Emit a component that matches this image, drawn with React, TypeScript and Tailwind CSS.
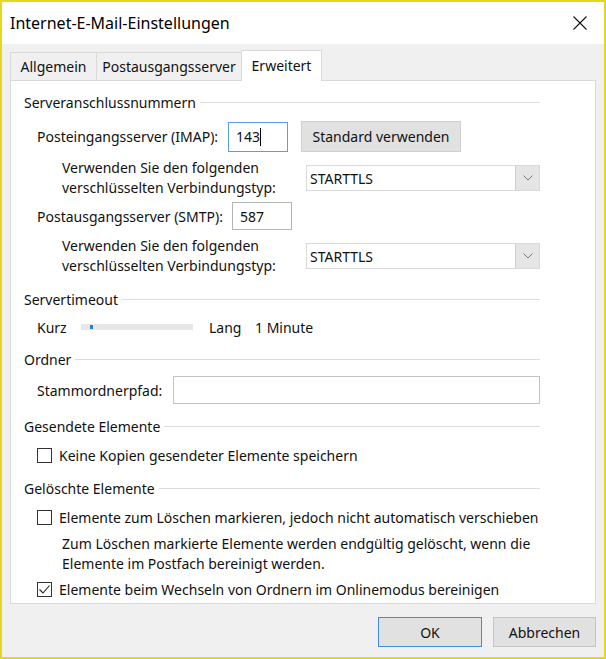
import React from 'react';

const font = { fontFamily: '"Noto Sans", "Open Sans", sans-serif' };

function GroupHeader({ title, className = '' }: { title: string; className?: string }) {
  return (
    <div className={`flex items-center h-[20px] ${className}`}>
      <span className="whitespace-nowrap">{title}</span>
      <div className="ml-[4px] flex-1 h-px bg-[#dcdcdc]" />
    </div>
  );
}

function Combo({ value }: { value: string }) {
  return (
    <div className="flex w-[234px] h-[26px] border border-[#d9d9d9] bg-white">
      <div className="flex-1 flex items-center pl-[3px]">{value}</div>
      <div className="w-[24px] h-full bg-[#e5e5e5] border-l border-[#cccccc] flex items-center justify-center">
        <svg width="10" height="6" viewBox="0 0 10 6">
          <path d="M0.5 0.5 L5 5 L9.5 0.5" fill="none" stroke="#7a7a7a" strokeWidth="1" />
        </svg>
      </div>
    </div>
  );
}

function Checkbox({ checked = false }: { checked?: boolean }) {
  return (
    <div className="w-[15px] h-[15px] border border-[#333333] bg-white flex items-center justify-center flex-none">
      {checked && (
        <svg width="13" height="13" viewBox="0 0 13 13">
          <path d="M1.5 6.5 L5 10 L11.5 2.5" fill="none" stroke="#222222" strokeWidth="1.1" />
        </svg>
      )}
    </div>
  );
}

function EncryptionRow({ className = '' }: { className?: string }) {
  return (
    <div className={`flex items-center h-[40px] ml-[38px] ${className}`}>
      <div className="w-[244px] leading-[20px] whitespace-nowrap">
        Verwenden Sie den folgenden
        <br />
        verschlüsselten Verbindungstyp:
      </div>
      <Combo value="STARTTLS" />
    </div>
  );
}

function Tab({ label, width, active = false }: { label: string; width: string; active?: boolean }) {
  if (active) {
    return (
      <div
        className={`${width} h-[31px] -mb-px relative z-10 bg-white border border-b-0 border-[#d9d9d9] flex items-center justify-center pb-[2px]`}
      >
        {label}
      </div>
    );
  }
  return (
    <div className={`${width} h-[28px] border border-b-0 border-r-0 border-[#d9d9d9] flex items-center justify-center`}>
      {label}
    </div>
  );
}

export default function App() {
  return (
    <div
      className="w-[606px] h-[659px] border-2 border-[#e8d520] bg-[#f0f0f0] flex flex-col text-[14px] text-[#111111]"
      style={font}
    >
      {/* title bar */}
      <div className="h-[42px] flex-none bg-white flex items-center justify-between pl-[8px] pr-[17px]">
        <span className="text-[16px] text-black">Internet-E-Mail-Einstellungen</span>
        <svg width="14" height="14" viewBox="0 0 14 14">
          <path d="M0.5 0.5 L13.5 13.5 M13.5 0.5 L0.5 13.5" stroke="#111111" strokeWidth="1.1" />
        </svg>
      </div>

      <div className="flex-1 flex flex-col px-[8px]">
        {/* tabs */}
        <div className="flex items-end pt-[6px]">
          <Tab label="Allgemein" width="w-[86px]" />
          <Tab label="Postausgangsserver" width="w-[145px]" />
          <Tab label="Erweitert" width="w-[81px]" active />
        </div>

        {/* panel */}
        <div className="h-[524px] flex-none bg-white border border-[#d9d9d9] pl-[13px] pt-[11px]">
          <div className="w-[516px] flex flex-col">
            <GroupHeader title="Serveranschlussnummern" />

            <div className="flex items-center h-[31px] mt-[9px] ml-[13px]">
              <span className="w-[191px] whitespace-nowrap">Posteingangsserver (IMAP):</span>
              <div className="w-[60px] h-[30px] border border-[#5a9ee6] flex items-center pl-[7px]">
                <span>143</span>
                <span className="w-px h-[18px] bg-black" />
              </div>
              <button className="ml-[13px] w-[160px] h-[31px] bg-[#e1e1e1] border border-[#cfcfcf]">
                Standard verwenden
              </button>
            </div>

            <EncryptionRow className="mt-[6px]" />

            <div className="flex items-center h-[28px] mt-[4px] ml-[13px]">
              <span className="w-[195px] whitespace-nowrap">Postausgangsserver (SMTP):</span>
              <div className="w-[60px] h-[28px] border border-[#b4b4b4] flex items-center pl-[7px]">587</div>
            </div>

            <EncryptionRow className="mt-[6px]" />

            <GroupHeader title="Servertimeout" className="mt-[13px]" />

            <div className="flex items-center h-[20px] mt-[8px] ml-[13px]">
              <span className="w-[44px]">Kurz</span>
              <div className="relative w-[112px] h-[6px] bg-[#e7e7e7]">
                <div className="absolute left-[9px] top-[1px] w-[3px] h-[4px] bg-[#2a7fd0]" />
              </div>
              <span className="ml-[16px] w-[46px]">Lang</span>
              <span>1 Minute</span>
            </div>

            <GroupHeader title="Ordner" className="mt-[12px]" />

            <div className="flex items-center h-[28px] mt-[7px] ml-[13px]">
              <span className="w-[136px] whitespace-nowrap">Stammordnerpfad:</span>
              <div className="w-[367px] h-[28px] border border-[#c3c3c3]" />
            </div>

            <GroupHeader title="Gesendete Elemente" className="mt-[12px]" />

            <div className="flex items-center h-[20px] mt-[9px] ml-[13px]">
              <Checkbox />
              <span className="ml-[7px] whitespace-nowrap">Keine Kopien gesendeter Elemente speichern</span>
            </div>

            <GroupHeader title="Gelöschte Elemente" className="mt-[13px]" />

            <div className="flex items-center h-[20px] mt-[9px] ml-[13px]">
              <Checkbox />
              <span className="ml-[7px] whitespace-nowrap">
                Elemente zum Löschen markieren, jedoch nicht automatisch verschieben
              </span>
            </div>

            <div className="h-[40px] mt-[7px] ml-[38px] leading-[20px] whitespace-nowrap">
              Zum Löschen markierte Elemente werden endgültig gelöscht, wenn die
              <br />
              Elemente im Postfach bereinigt werden.
            </div>

            <div className="flex items-center h-[20px] mt-[5px] ml-[13px]">
              <Checkbox checked />
              <span className="ml-[7px] whitespace-nowrap">
                Elemente beim Wechseln von Ordnern im Onlinemodus bereinigen
              </span>
            </div>
          </div>
        </div>

        {/* buttons */}
        <div className="flex justify-end gap-[11px] mt-[13px]">
          <button className="w-[104px] h-[30px] bg-[#e1e1e1] border border-[#3d8ee0]">OK</button>
          <button className="w-[103px] h-[30px] bg-[#e1e1e1] border border-[#c4c4c4]">Abbrechen</button>
        </div>
      </div>
    </div>
  );
}
